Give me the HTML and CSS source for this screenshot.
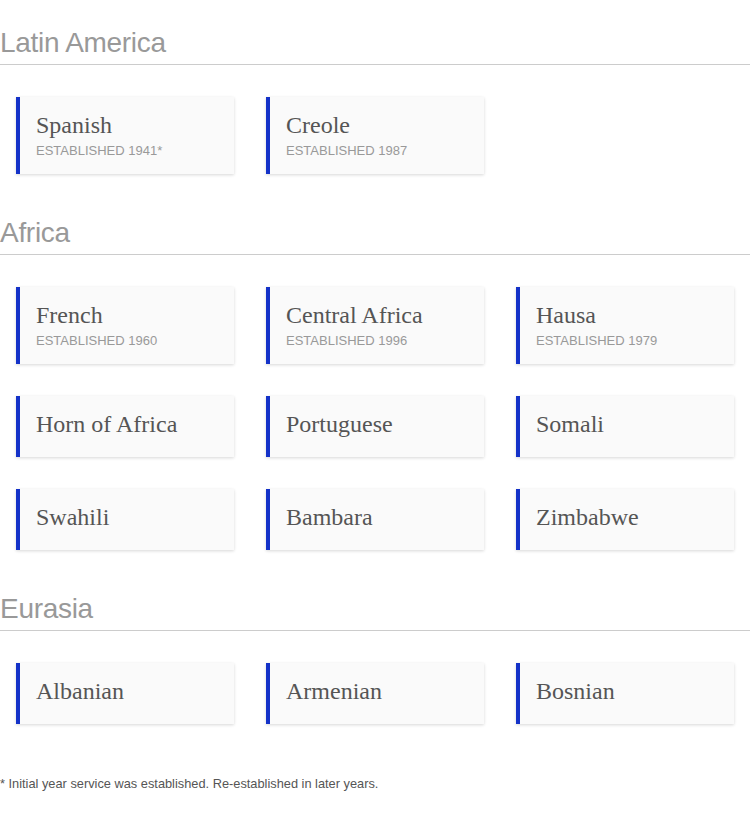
FILE: index.html
```html
<!DOCTYPE html>
<html lang="en">
<head>
<meta charset="utf-8">
<title>Language Services</title>
<link rel="stylesheet" href="styles.css">
</head>
<body>
<section class="region">
  <h2 class="region-title">Latin America</h2>
  <ul class="services">
    <li class="card"><span class="card-name">Spanish</span><span class="card-meta">Established 1941*</span></li>
    <li class="card"><span class="card-name">Creole</span><span class="card-meta">Established 1987</span></li>
  </ul>
</section>
<section class="region">
  <h2 class="region-title">Africa</h2>
  <ul class="services">
    <li class="card"><span class="card-name">French</span><span class="card-meta">Established 1960</span></li>
    <li class="card"><span class="card-name">Central Africa</span><span class="card-meta">Established 1996</span></li>
    <li class="card"><span class="card-name">Hausa</span><span class="card-meta">Established 1979</span></li>
    <li class="card"><span class="card-name">Horn of Africa</span></li>
    <li class="card"><span class="card-name">Portuguese</span></li>
    <li class="card"><span class="card-name">Somali</span></li>
    <li class="card"><span class="card-name">Swahili</span></li>
    <li class="card"><span class="card-name">Bambara</span></li>
    <li class="card"><span class="card-name">Zimbabwe</span></li>
  </ul>
</section>
<section class="region">
  <h2 class="region-title">Eurasia</h2>
  <ul class="services">
    <li class="card"><span class="card-name">Albanian</span></li>
    <li class="card"><span class="card-name">Armenian</span></li>
    <li class="card"><span class="card-name">Bosnian</span></li>
  </ul>
</section>
<p class="footnote">* Initial year service was established. Re-established in later years.</p>
</body>
</html>
```
FILE: styles.css
```css
html, body {
  margin: 0;
  padding: 0;
  background: #fff;
}
body {
  font-family: "Liberation Sans", Arial, sans-serif;
}
.region-title {
  margin: 0;
  padding: 28px 0 6px;
  font-size: 28px;
  line-height: 30px;
  font-weight: normal;
  color: #999;
  border-bottom: 1px solid #ccc;
  letter-spacing: -0.3px;
}
.services {
  list-style: none;
  margin: 0;
  padding: 16px 0 0;
  display: grid;
  grid-template-columns: repeat(3, 250px);
}
.card {
  margin: 16px;
  padding: 14px 16px 18px;
  background: #fafafa;
  border-left: 4px solid #1432c8;
  box-shadow: 0 1px 3px rgba(0, 0, 0, 0.16);
  display: flex;
  flex-direction: column;
  align-self: start;
}
.card-name {
  font-family: "Liberation Serif", "Times New Roman", serif;
  font-size: 24px;
  line-height: 29px;
  color: #555;
}
.card-meta {
  margin: 3px 0 -2px;
  font-size: 13px;
  line-height: 15px;
  color: #999;
  text-transform: uppercase;
}
.footnote {
  margin: 36px 0 0;
  font-size: 12.8px;
  line-height: 15px;
  color: #555;
}
```
